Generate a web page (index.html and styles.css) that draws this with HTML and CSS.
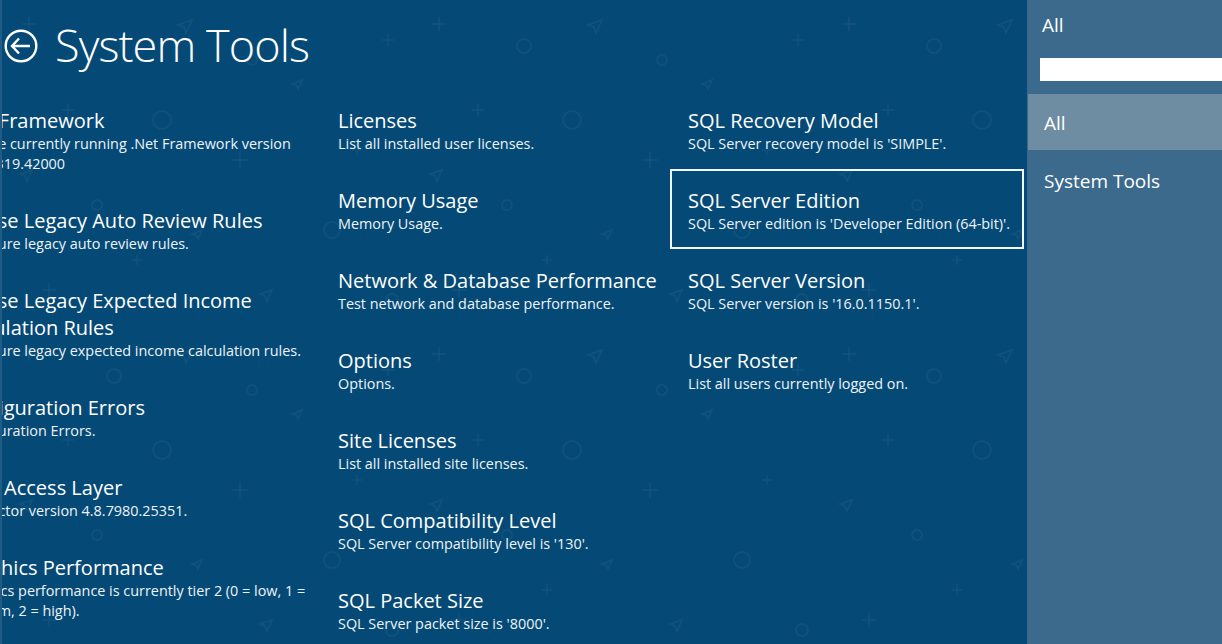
FILE: index.html
```html
<!DOCTYPE html>
<html lang="en">
<head>
<meta charset="UTF-8" />
<title>System Tools</title>
<link rel="stylesheet" href="styles.css">
</head>
<body>
  <div class="app">
    <main class="hub">
      <!-- faint doodle pattern behind the hub -->
      <svg class="backdrop" width="100%" height="100%" aria-hidden="true">
        <defs>
          <pattern id="doodles" width="410" height="330" patternUnits="userSpaceOnUse">
            <g fill="none" stroke="rgba(255,255,255,0.045)" stroke-width="1.5">
              <path d="M20 24h14M27 17v14" />
              <circle cx="112" cy="46" r="7" />
              <path d="M190 20l-14 5 6 2 2 6z" />
              <path d="M60 110h12M66 104v12" />
              <circle cx="160" cy="120" r="9" />
              <path d="M30 170l-12 4 5 2 2 5z" />
              <path d="M230 160h16M238 152v16" />
              <circle cx="95" cy="205" r="5" />
              <path d="M300 80l-10 4 4 1 2 4z" />
              <path d="M130 260h10M135 255v10" />
              <circle cx="330" cy="230" r="8" />
              <path d="M380 40h12M386 34v12" />
              <path d="M270 290l-12 4 5 2 2 5z" />
              <circle cx="250" cy="60" r="5" />
              <path d="M350 150h10M355 145v10" />
              <path d="M40 290h14M47 283v14" />
              <circle cx="390" cy="300" r="6" />
              <path d="M200 230l-10 4 4 1 2 4z" />
            </g>
          </pattern>
        </defs>
        <rect width="100%" height="100%" fill="url(#doodles)" />
      </svg>

      <header class="page-header">
        <span class="back">
          <svg width="34" height="34" viewBox="0 0 34 34">
            <circle cx="17" cy="17" r="15.3" fill="none" stroke="#fff" stroke-width="2.4" />
            <path d="M8 17h18M15 9.5L8 17l7 7.5" fill="none" stroke="#fff" stroke-width="2.4" stroke-linejoin="miter" />
          </svg>
        </span>
        <h1>System Tools</h1>
      </header>

      <div class="tiles">
        <div class="col col-first">
          <div class="tile tall">
            <div class="tile-title">.Net Framework</div>
            <div class="tile-desc">You are currently running .Net Framework version<br>4.0.30319.42000</div>
          </div>
          <div class="tile">
            <div class="tile-title">To Use Legacy Auto Review Rules</div>
            <div class="tile-desc">Configure legacy auto review rules.</div>
          </div>
          <div class="tile">
            <div class="tile-title">To Use Legacy Expected Income<br>Calculation Rules</div>
            <div class="tile-desc">Configure legacy expected income calculation rules.</div>
          </div>
          <div class="tile">
            <div class="tile-title">Configuration Errors</div>
            <div class="tile-desc">Configuration Errors.</div>
          </div>
          <div class="tile">
            <div class="tile-title">Data Access Layer</div>
            <div class="tile-desc">Connector version 4.8.7980.25351.</div>
          </div>
          <div class="tile">
            <div class="tile-title">Graphics Performance</div>
            <div class="tile-desc">Graphics performance is currently tier 2 (0 = low, 1 =<br>medium, 2 = high).</div>
          </div>
        </div>

        <div class="col">
          <div class="tile">
            <div class="tile-title">Licenses</div>
            <div class="tile-desc">List all installed user licenses.</div>
          </div>
          <div class="tile">
            <div class="tile-title">Memory Usage</div>
            <div class="tile-desc">Memory Usage.</div>
          </div>
          <div class="tile">
            <div class="tile-title">Network &amp; Database Performance</div>
            <div class="tile-desc">Test network and database performance.</div>
          </div>
          <div class="tile">
            <div class="tile-title">Options</div>
            <div class="tile-desc">Options.</div>
          </div>
          <div class="tile">
            <div class="tile-title">Site Licenses</div>
            <div class="tile-desc">List all installed site licenses.</div>
          </div>
          <div class="tile">
            <div class="tile-title">SQL Compatibility Level</div>
            <div class="tile-desc">SQL Server compatibility level is '130'.</div>
          </div>
          <div class="tile">
            <div class="tile-title">SQL Packet Size</div>
            <div class="tile-desc">SQL Server packet size is '8000'.</div>
          </div>
        </div>

        <div class="col">
          <div class="tile">
            <div class="tile-title">SQL Recovery Model</div>
            <div class="tile-desc">SQL Server recovery model is 'SIMPLE'.</div>
          </div>
          <div class="tile selected">
            <div class="tile-title">SQL Server Edition</div>
            <div class="tile-desc">SQL Server edition is 'Developer Edition (64-bit)'.</div>
          </div>
          <div class="tile">
            <div class="tile-title">SQL Server Version</div>
            <div class="tile-desc">SQL Server version is '16.0.1150.1'.</div>
          </div>
          <div class="tile">
            <div class="tile-title">User Roster</div>
            <div class="tile-desc">List all users currently logged on.</div>
          </div>
        </div>
      </div>
    </main>

    <aside class="filter">
      <div class="filter-label">All</div>
      <input class="filter-search" type="text" />
      <ul class="filter-list">
        <li class="active">All</li>
        <li>System Tools</li>
      </ul>
    </aside>
  </div>
</body>
</html>
```

FILE: styles.css
```css
body {
  margin: 0;
  overflow: hidden;
  font-family: "Segoe UI", "Open Sans", sans-serif;
  color: white;
}
.app {
  display: flex;
  width: 1222px;
  height: 644px;
}

/* Hub area */
.hub {
  position: relative;
  flex: 0 0 1027px;
  background: #054a76;
  border-left: 2px solid #1f5c86;
  box-sizing: border-box;
  overflow: hidden;
}
.backdrop {
  position: absolute;
  top: 0;
  left: 0;
}
.page-header {
  position: relative;
  height: 89px;
  display: flex;
  align-items: center;
  padding-left: 2px;
  box-sizing: border-box;
}
.back {
  display: flex;
  width: 34px;
  height: 34px;
  margin-top: 2px;
}
.page-header h1 {
  margin: 0 0 0 17px;
  font-weight: 300;
  font-size: 45px;
  letter-spacing: -0.9px;
  line-height: 1;
}

/* Tiles */
.tiles {
  position: relative;
  display: flex;
  margin-left: -60px;
}
.col {
  width: 350px;
  flex: none;
}
.col-first {
  width: 383px;
  margin-left: -5px;
}
.tile {
  width: 354px;
  min-height: 80px;
  padding: 16px 16px 13px;
  border: 2px solid transparent;
  box-sizing: border-box;
  white-space: nowrap;
}
.tile.selected {
  border-color: #f4f7fa;
}
.tile-title {
  font-size: 20px;
  line-height: 27px;
}
.tile-desc {
  font-size: 14.4px;
  line-height: 20px;
  color: #eef3f7;
}

/* Filter panel */
.filter {
  flex: 1;
  background: #3c6a8d;
  overflow: hidden;
}
.filter-label {
  font-size: 19px;
  line-height: 26px;
  padding: 12px 0 0 15px;
}
.filter-search {
  display: block;
  width: 200px;
  height: 23px;
  margin: 20px 0 0 13px;
  padding: 0;
  border: none;
  background: white;
}
.filter-list {
  list-style: none;
  margin: 13px 0 0;
  padding: 0;
}
.filter-list li {
  height: 62px;
  line-height: 62px;
  padding-left: 16px;
  margin-left: 1px;
  font-size: 19px;
}
.filter-list li.active {
  height: 56px;
  line-height: 58px;
  background: #6e8da2;
}
```
